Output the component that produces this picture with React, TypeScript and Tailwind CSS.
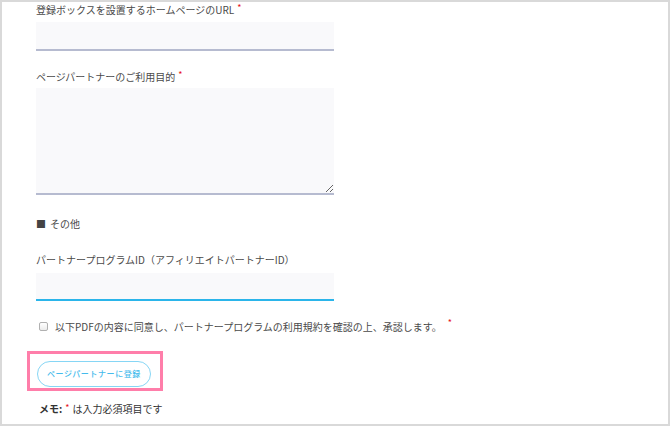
import React from 'react';

const font = { fontFamily: '"Noto Sans CJK JP", "Noto Sans", sans-serif' };

function Req() {
  return <span className="text-[#e8141c] text-[9px] align-top relative top-[-2px] ml-[3px]">*</span>;
}

function Label({ children, req }: { children: React.ReactNode; req?: boolean }) {
  return (
    <div className="h-[16px] leading-[16px] text-[10px] text-[#4a4a4a]">
      {children}
      {req && <Req />}
    </div>
  );
}

export default function App() {
  return (
    <div
      className="w-[670px] h-[426px] border-2 border-[#d9d9d9] bg-white overflow-hidden pl-[34px] flex flex-col"
      style={font}
    >
      <Label req>登録ボックスを設置するホームページのURL</Label>
      <input className="mt-[4px] w-[298px] h-[29px] bg-[#f9f9fb] border-b-2 border-[#b6bbd0] outline-none" />

      <div className="mt-[18px]">
        <Label req>ページパートナーのご利用目的</Label>
      </div>
      <textarea className="mt-[3px] w-[298px] h-[107px] bg-[#f9f9fb] border-b-2 border-[#b6bbd0] outline-none" />

      <div className="mt-[21px] h-[16px] leading-[16px] text-[10px] text-[#4a4a4a] flex items-center gap-[4px]">
        <span className="text-[#444] text-[10px]">■</span>
        <span>その他</span>
      </div>

      <div className="mt-[20px]">
        <Label>パートナープログラムID（アフィリエイトパートナーID）</Label>
      </div>
      <input className="mt-[5px] w-[298px] h-[28px] bg-[#f9f9fb] border-b-2 border-[#2bb5ea] outline-none" />

      <div className="mt-[17px] h-[16px] flex items-center text-[10px] text-[#4a4a4a]">
        <span className="ml-[3px] w-[9px] h-[9px] rounded-[2px] border border-[#b0b0b0] bg-gradient-to-b from-white to-[#ececec]" />
        <span className="ml-[7px]">以下PDFの内容に同意し、パートナープログラムの利用規約を確認の上、承認します。</span>
        <span className="text-[#e8141c] text-[9px] relative top-[-3px] ml-[6px]">*</span>
      </div>

      <div className="mt-[17px] ml-[-9px] w-[136px] h-[40px] border-[3px] border-[#ff7eaa] pl-[7px] pt-[4px]">
        <button className="w-[114px] h-[26px] rounded-full border border-[#86d6f5] bg-white text-[#45bbec] text-[8px] font-medium tracking-[0.6px]">
          ページパートナーに登録
        </button>
      </div>

      <div className="mt-[10px] ml-[3px] h-[16px] leading-[16px] text-[10px] text-[#333]">
        <span className="font-bold">メモ:</span>
        <span className="text-[#e8141c] text-[9px] relative top-[-2px] ml-[3px]">*</span>
        <span className="ml-[3px]">は入力必須項目です</span>
      </div>
    </div>
  );
}
